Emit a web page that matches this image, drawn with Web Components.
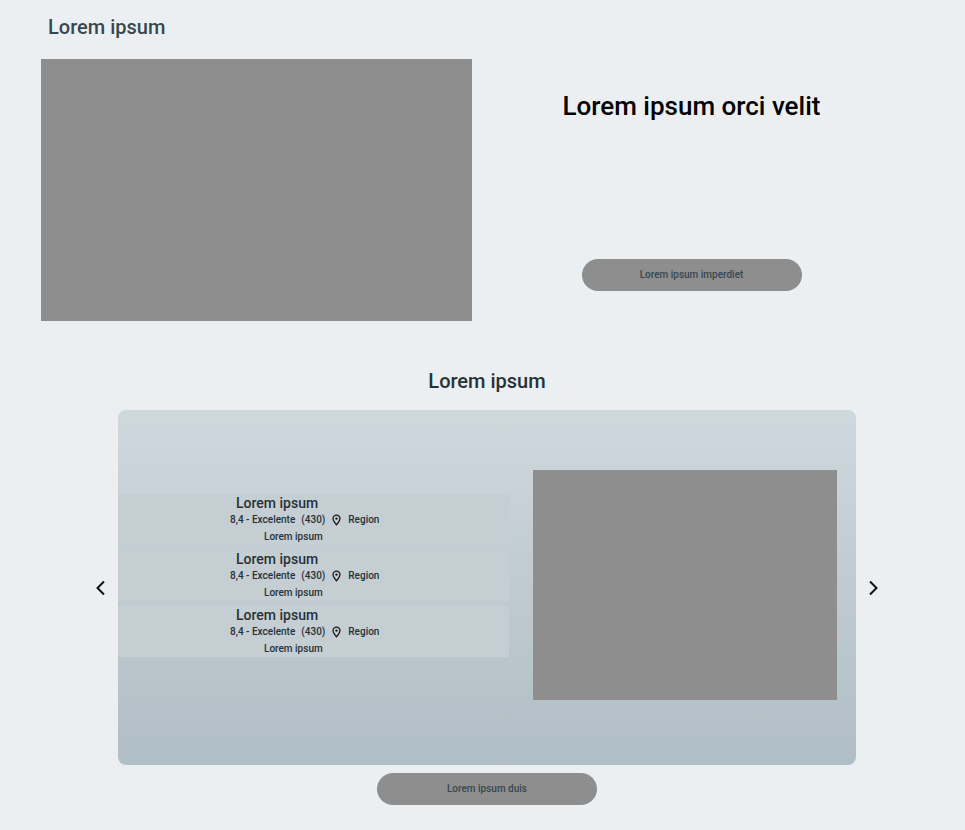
<!DOCTYPE html>
<html lang="en">
<head>
<meta charset="utf-8">
<title>Lorem ipsum</title>
<style>
  body { margin: 0; background: #eceff1; color: #263238; font-family: Roboto, "Liberation Sans", sans-serif; font-weight: 500; }
</style>
</head>
<body>
<hero-section heading="Lorem ipsum" tagline="Lorem ipsum orci velit" action="Lorem ipsum imperdiet"></hero-section>
<stay-carousel heading="Lorem ipsum">
  <stay-item name="Lorem ipsum" rating="8,4 - Excelente" reviews="(430)" region="Region">Lorem ipsum</stay-item>
  <stay-item name="Lorem ipsum" rating="8,4 - Excelente" reviews="(430)" region="Region">Lorem ipsum</stay-item>
  <stay-item name="Lorem ipsum" rating="8,4 - Excelente" reviews="(430)" region="Region">Lorem ipsum</stay-item>
  <pill-button slot="action">Lorem ipsum duis</pill-button>
</stay-carousel>
<script>
  class PillButton extends HTMLElement {
    connectedCallback() {
      this.attachShadow({ mode: "open" }).innerHTML = `
        <style>
          :host { display: block; width: 220px; }
          button { width: 100%; min-height: 32px; padding: 0 16px; border: 0; border-radius: 16px; background: #8e8e8e; color: #37474f; font: 500 10px/16px Roboto, "Liberation Sans", sans-serif; cursor: pointer; display: block; }
        </style>
        <button type="button"><slot></slot></button>`;
    }
  }

  class HeroSection extends HTMLElement {
    connectedCallback() {
      this.attachShadow({ mode: "open" }).innerHTML = `
        <style>
          :host { display: block; padding: 15px 58px 0 41px; }
          h1 { margin: 0 0 20px; padding-left: 7px; color: #37474f; font-size: 20px; line-height: 24px; font-weight: 500; }
          .row { display: grid; grid-template-columns: 1fr 1fr; gap: 4px; }
          .media { background: #8e8e8e; min-height: 262px; }
          .copy { display: flex; flex-direction: column; align-items: center; justify-content: space-between; padding: 31px 0 30px; }
          h2 { margin: 0; color: #000; font-size: 26px; line-height: 32px; font-weight: 500; text-align: center; }
        </style>
        <h1>${this.getAttribute("heading")}</h1>
        <div class="row">
          <div class="media"></div>
          <div class="copy">
            <h2>${this.getAttribute("tagline")}</h2>
            <pill-button>${this.getAttribute("action")}</pill-button>
          </div>
        </div>`;
    }
  }

  class StayItem extends HTMLElement {
    connectedCallback() {
      this.attachShadow({ mode: "open" }).innerHTML = `
        <style>
          :host { display: block; box-sizing: border-box; min-height: 51px; padding-left: 112px; background: #c4ced3; font-size: 10px; line-height: 16px; }
          h3 { margin: 0; padding-left: 6px; font-size: 14px; line-height: 18px; font-weight: 500; }
          .meta { display: flex; align-items: center; }
          .reviews { margin-left: 6px; }
          svg { margin: 0 6px; display: block; }
          .note { padding-left: 34px; line-height: 17px; }
        </style>
        <h3>${this.getAttribute("name")}</h3>
        <div class="meta">
          <span>${this.getAttribute("rating")}</span>
          <span class="reviews">${this.getAttribute("reviews")}</span>
          <svg width="11" height="12" viewBox="0 0 11 12" fill="none" stroke="#1c1b1f" aria-hidden="true">
            <path d="M5.5 10.8C3.4 8.4 2 6.5 2 4.6a3.5 3.5 0 0 1 7 0C9 6.5 7.6 8.4 5.5 10.8z" stroke-width="1.3"/>
            <circle cx="5.5" cy="4.6" r="1.2" fill="#1c1b1f" stroke="none"/>
          </svg>
          <span>${this.getAttribute("region")}</span>
        </div>
        <div class="note"><slot></slot></div>`;
    }
  }

  class ArrowButton extends HTMLElement {
    connectedCallback() {
      const next = this.getAttribute("direction") === "next";
      this.attachShadow({ mode: "open" }).innerHTML = `
        <style>
          :host { display: block; }
          button { display: block; padding: 0; border: 0; background: none; cursor: pointer; }
          svg { display: block; }
        </style>
        <button type="button" aria-label="${next ? "Next" : "Previous"}">
          <svg width="18" height="18" viewBox="0 0 18 18" fill="none" stroke="#111" stroke-width="2">
            <path d="${next ? "M5 2.5 11.5 9 5 15.5" : "M13 2.5 6.5 9l6.5 6.5"}"/>
          </svg>
        </button>`;
    }
  }

  class StayCarousel extends HTMLElement {
    connectedCallback() {
      this.attachShadow({ mode: "open" }).innerHTML = `
        <style>
          :host { display: flex; flex-direction: column; align-items: center; padding: 48px 82px 26px 91px; }
          h2 { margin: 0 0 17px; font-size: 20px; line-height: 24px; font-weight: 500; }
          .row { display: flex; align-items: center; gap: 9px; align-self: stretch; margin-bottom: 8px; }
          .panel { flex: 1; box-sizing: border-box; min-height: 355px; display: grid; grid-template-columns: 390fr 304fr; gap: 24px; align-items: center; padding: 0 19px 6px 0; border-radius: 8px; background: linear-gradient(#cfd8dd, #b0bec5); }
          .list { display: grid; gap: 5px; padding-bottom: 18px; }
          .media { min-height: 230px; background: #8e8e8e; }
        </style>
        <h2>${this.getAttribute("heading")}</h2>
        <div class="row">
          <arrow-button direction="previous"></arrow-button>
          <div class="panel">
            <div class="list"><slot></slot></div>
            <div class="media"></div>
          </div>
          <arrow-button direction="next"></arrow-button>
        </div>
        <slot name="action"></slot>`;
    }
  }

  customElements.define("pill-button", PillButton);
  customElements.define("arrow-button", ArrowButton);
  customElements.define("hero-section", HeroSection);
  customElements.define("stay-item", StayItem);
  customElements.define("stay-carousel", StayCarousel);
</script>
</body>
</html>
